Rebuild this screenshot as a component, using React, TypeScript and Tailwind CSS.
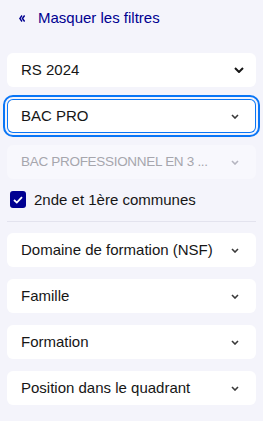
const font = { fontFamily: '"Liberation Sans", Arial, sans-serif' };

function Chevron({ bold = false, muted = false }: { bold?: boolean; muted?: boolean }) {
  if (bold) {
    return (
      <svg width="10" height="6" viewBox="0 0 10 6" className="shrink-0" aria-hidden>
        <path d="M1 1 L5 5 L9 1" fill="none" stroke="#161616" strokeWidth="2" />
      </svg>
    );
  }
  return (
    <svg width="8" height="5" viewBox="0 0 8 5" className="shrink-0" aria-hidden>
      <path
        d="M1 1 L4 4 L7 1"
        fill="none"
        stroke={muted ? "#b5b5c0" : "#3a3a3a"}
        strokeWidth="1.6"
      />
    </svg>
  );
}

function Select({
  label,
  bold,
  focused,
  disabled,
}: {
  label: string;
  bold?: boolean;
  focused?: boolean;
  disabled?: boolean;
}) {
  return (
    <div
      className={`flex h-[34px] items-center justify-between rounded-md pl-[14px] text-[15px] ${
        bold ? "pr-[12px]" : "pr-[17px]"
      } ${disabled ? "bg-[#f8f8fd] text-[#a6a6ad]" : "bg-white text-[#161616]"} ${
        focused
          ? "shadow-[inset_0_0_0_1px_#0a76f6] outline-2 outline-offset-2 outline-[#0a76f6]"
          : ""
      }`}
    >
      <span
        className={`whitespace-nowrap pr-2 ${disabled ? "text-[13.5px] tracking-[-0.3px]" : ""}`}
      >
        {label}
      </span>
      <Chevron bold={bold} muted={disabled} />
    </div>
  );
}

export default function App() {
  return (
    <div className="min-h-[421px] w-[263px] bg-[#f4f4fb]" style={font}>
      <div className="flex items-center gap-[13px] pl-[19px] pt-[9px] text-[15px] text-[#000091]">
        <svg width="6" height="7" viewBox="0 0 6 7" aria-hidden>
          <path d="M3 0.5 L0.8 3.5 L3 6.5 M5.6 0.5 L3.4 3.5 L5.6 6.5" fill="none" stroke="#000091" strokeWidth="1.4" />
        </svg>
        <span className="leading-[18px]">Masquer les filtres</span>
      </div>

      <div className="mt-[26px] flex flex-col gap-3 px-[7px]">
        <Select label="RS 2024" bold />
        <Select label="BAC PRO" focused />
        <Select label="BAC PROFESSIONNEL EN 3 ..." disabled />
      </div>

      <div className="mt-3 flex items-center gap-2 pl-[10px] text-[15px] text-[#161616]">
        <span className="flex h-[17px] w-[16px] items-center justify-center rounded-[3px] bg-[#000091]">
          <svg width="10" height="8" viewBox="0 0 10 8" aria-hidden>
            <path d="M1 4 L3.8 6.6 L9 1.2" fill="none" stroke="white" strokeWidth="1.8" />
          </svg>
        </span>
        <span className="leading-[17px]">2nde et 1ère communes</span>
      </div>

      <div className="mx-[7px] mt-[13px] h-px bg-[#e3e3ee]" />

      <div className="mt-[11px] flex flex-col gap-3 px-[7px]">
        <Select label="Domaine de formation (NSF)" />
        <Select label="Famille" />
        <Select label="Formation" />
        <Select label="Position dans le quadrant" />
      </div>
    </div>
  );
}
